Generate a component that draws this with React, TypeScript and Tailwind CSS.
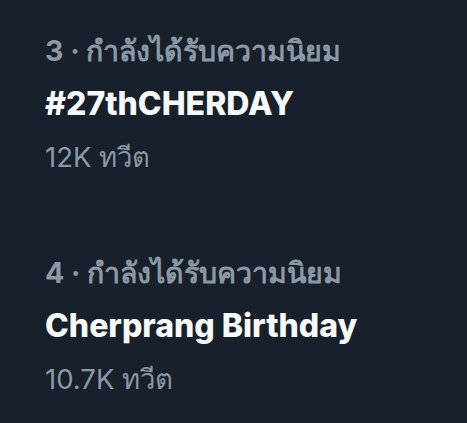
import React from 'react';

const TRENDS = [
  { rank: 3, title: '#27thCHERDAY', count: '12K' },
  { rank: 4, title: 'Cherprang Birthday', count: '10.7K' },
];

export default function App() {
  return (
    <div className="w-[467px] h-[423px] bg-[#17202b] overflow-hidden font-['Inter','Noto_Sans',sans-serif]">
      <div className="flex flex-col gap-[81px] pt-[33px] pl-[45px]">
        {TRENDS.map((t) => (
          <div key={t.rank} className="flex flex-col">
            <div className="text-[28.5px] leading-[36px] font-bold text-[#8b98a5]">
              {t.rank} · กำลังได้รับความนิยม
            </div>
            <div className="mt-[15px] text-[32px] leading-[40px] font-extrabold text-[#f7f9f9]">
              {t.title}
            </div>
            <div className="mt-[16px] text-[27.5px] leading-[34px] text-[#8b98a5]">
              {t.count} ทวีต
            </div>
          </div>
        ))}
      </div>
    </div>
  );
}
